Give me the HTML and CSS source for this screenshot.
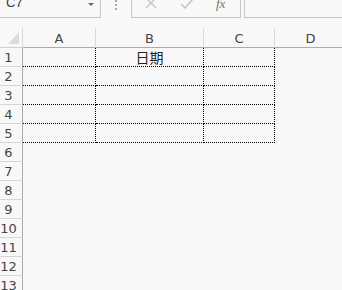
FILE: index.html
```html
<!DOCTYPE html>
<html>
<head>
<meta charset="utf-8">
<link rel="stylesheet" href="styles.css">
</head>
<body>
<div class="top">
  <div class="namebox"><span class="name">C7</span><span class="dd"></span></div>
  <div class="grip"><i></i><i></i><i></i></div>
  <div class="btns">
    <svg class="ic-x" width="12" height="12" viewBox="0 0 12 12"><path d="M1 1 L11 11 M11 1 L1 11" stroke="#c4c4c4" stroke-width="1.3" fill="none"/></svg>
    <svg class="ic-ok" width="14" height="12" viewBox="0 0 14 12"><path d="M1 6 L5 10 L13 1" stroke="#c4c4c4" stroke-width="1.5" fill="none"/></svg>
    <span class="fx">fx</span>
  </div>
  <div class="input"></div>
</div>
<div class="sheet">
  <div class="corner"><span class="tri"></span></div>
  <div class="ch">A</div><div class="ch">B</div><div class="ch">C</div><div class="ch">D</div>

  <div class="rh">1</div><div class="c b"></div><div class="c b txt">日期</div><div class="c b"></div><div class="c"></div>
  <div class="rh">2</div><div class="c b"></div><div class="c b"></div><div class="c b"></div><div class="c"></div>
  <div class="rh">3</div><div class="c b"></div><div class="c b"></div><div class="c b"></div><div class="c"></div>
  <div class="rh">4</div><div class="c b"></div><div class="c b"></div><div class="c b"></div><div class="c"></div>
  <div class="rh">5</div><div class="c b"></div><div class="c b"></div><div class="c b"></div><div class="c"></div>
  <div class="rh">6</div><div class="c"></div><div class="c"></div><div class="c"></div><div class="c"></div>
  <div class="rh">7</div><div class="c"></div><div class="c"></div><div class="c"></div><div class="c"></div>
  <div class="rh">8</div><div class="c"></div><div class="c"></div><div class="c"></div><div class="c"></div>
  <div class="rh">9</div><div class="c"></div><div class="c"></div><div class="c"></div><div class="c"></div>
  <div class="rh">10</div><div class="c"></div><div class="c"></div><div class="c"></div><div class="c"></div>
  <div class="rh">11</div><div class="c"></div><div class="c"></div><div class="c"></div><div class="c"></div>
  <div class="rh">12</div><div class="c"></div><div class="c"></div><div class="c"></div><div class="c"></div>
  <div class="rh">13</div><div class="c"></div><div class="c"></div><div class="c"></div><div class="c"></div>
</div>
</body>
</html>
```
FILE: styles.css
```css
html, body {
  margin: 0;
  padding: 0;
  background: #f8f8f8;
  overflow: hidden;
  width: 342px;
  height: 290px;
  font-family: "DejaVu Sans", sans-serif;
}

.top {
  display: flex;
  height: 18px;
  box-sizing: border-box;
}

.namebox {
  width: 101px;
  height: 18px;
  box-sizing: border-box;
  border-right: 1px solid #c6c6c6;
  border-bottom: 1px solid #c6c6c6;
  display: flex;
  align-items: flex-start;
  position: relative;
  overflow: hidden;
}

.name {
  font-family: "Liberation Sans", sans-serif;
  font-size: 13px;
  line-height: 13px;
  margin-top: -4px;
  margin-left: 6px;
  color: #3a3a3a;
}

.dd {
  margin-left: auto;
  margin-right: 6px;
  margin-top: 3px;
  width: 0;
  height: 0;
  border-left: 3px solid transparent;
  border-right: 3px solid transparent;
  border-top: 3px solid #6a6a6a;
}

.grip {
  width: 30px;
  display: flex;
  flex-direction: column;
  align-items: center;
  gap: 2px;
  padding-top: 0;
  padding-left: 1px;
  box-sizing: border-box;
  padding-right: 1px;
}

.grip i {
  display: block;
  width: 2px;
  height: 2px;
  background: #a8a8a8;
  margin-left: -1px;
}

.btns {
  width: 110px;
  height: 18px;
  box-sizing: border-box;
  border-left: 1px solid #c6c6c6;
  border-right: 1px solid #c6c6c6;
  border-bottom: 1px solid #c6c6c6;
  display: flex;
  align-items: flex-start;
  overflow: hidden;
}

.ic-x {
  margin-left: 13px;
  margin-top: -3px;
}

.ic-ok {
  margin-left: 23px;
  margin-top: -2px;
}

.fx {
  margin-left: 22px;
  margin-top: -3px;
  font-family: "Liberation Serif", serif;
  font-style: italic;
  font-size: 13px;
  line-height: 13px;
  color: #707070;
}

.input {
  flex: 1;
  margin-left: 3px;
  height: 18px;
  box-sizing: border-box;
  border-left: 1px solid #c6c6c6;
  border-bottom: 1px solid #c6c6c6;
}

.sheet {
  margin-top: 10px;
  display: grid;
  grid-template-columns: 23px 73px 108px 71px 72px;
  grid-template-rows: 20px;
  grid-auto-rows: 19px;
}

.corner {
  box-sizing: border-box;
  border-right: 1px solid #dadada;
  border-bottom: 1px solid #d0d0d0;
  position: relative;
}

.tri {
  position: absolute;
  left: 8px;
  top: 4px;
  width: 0;
  height: 0;
  border-left: 11px solid transparent;
  border-bottom: 12px solid #dcdcdc;
}

.ch {
  box-sizing: border-box;
  border-right: 1px solid #dadada;
  border-bottom: 1px solid #ababab;
  text-align: center;
  font-size: 13px;
  line-height: 16px;
  padding-top: 3px;
  color: #444;
}

.rh {
  box-sizing: border-box;
  border-right: 1px solid #ababab;
  border-bottom: 1px solid #d6d6d6;
  text-align: center;
  padding-right: 5px;
  font-size: 13px;
  line-height: 16px;
  padding-top: 2px;
  color: #444;
}

.c {
  box-sizing: border-box;
}

.c.b {
  border-right: 1px dotted #000;
  border-bottom: 1px dotted #000;
}

.txt {
  text-align: center;
  font-family: "Noto Sans CJK SC", sans-serif;
  font-size: 14px;
  line-height: 18px;
  color: #222;
}
```
